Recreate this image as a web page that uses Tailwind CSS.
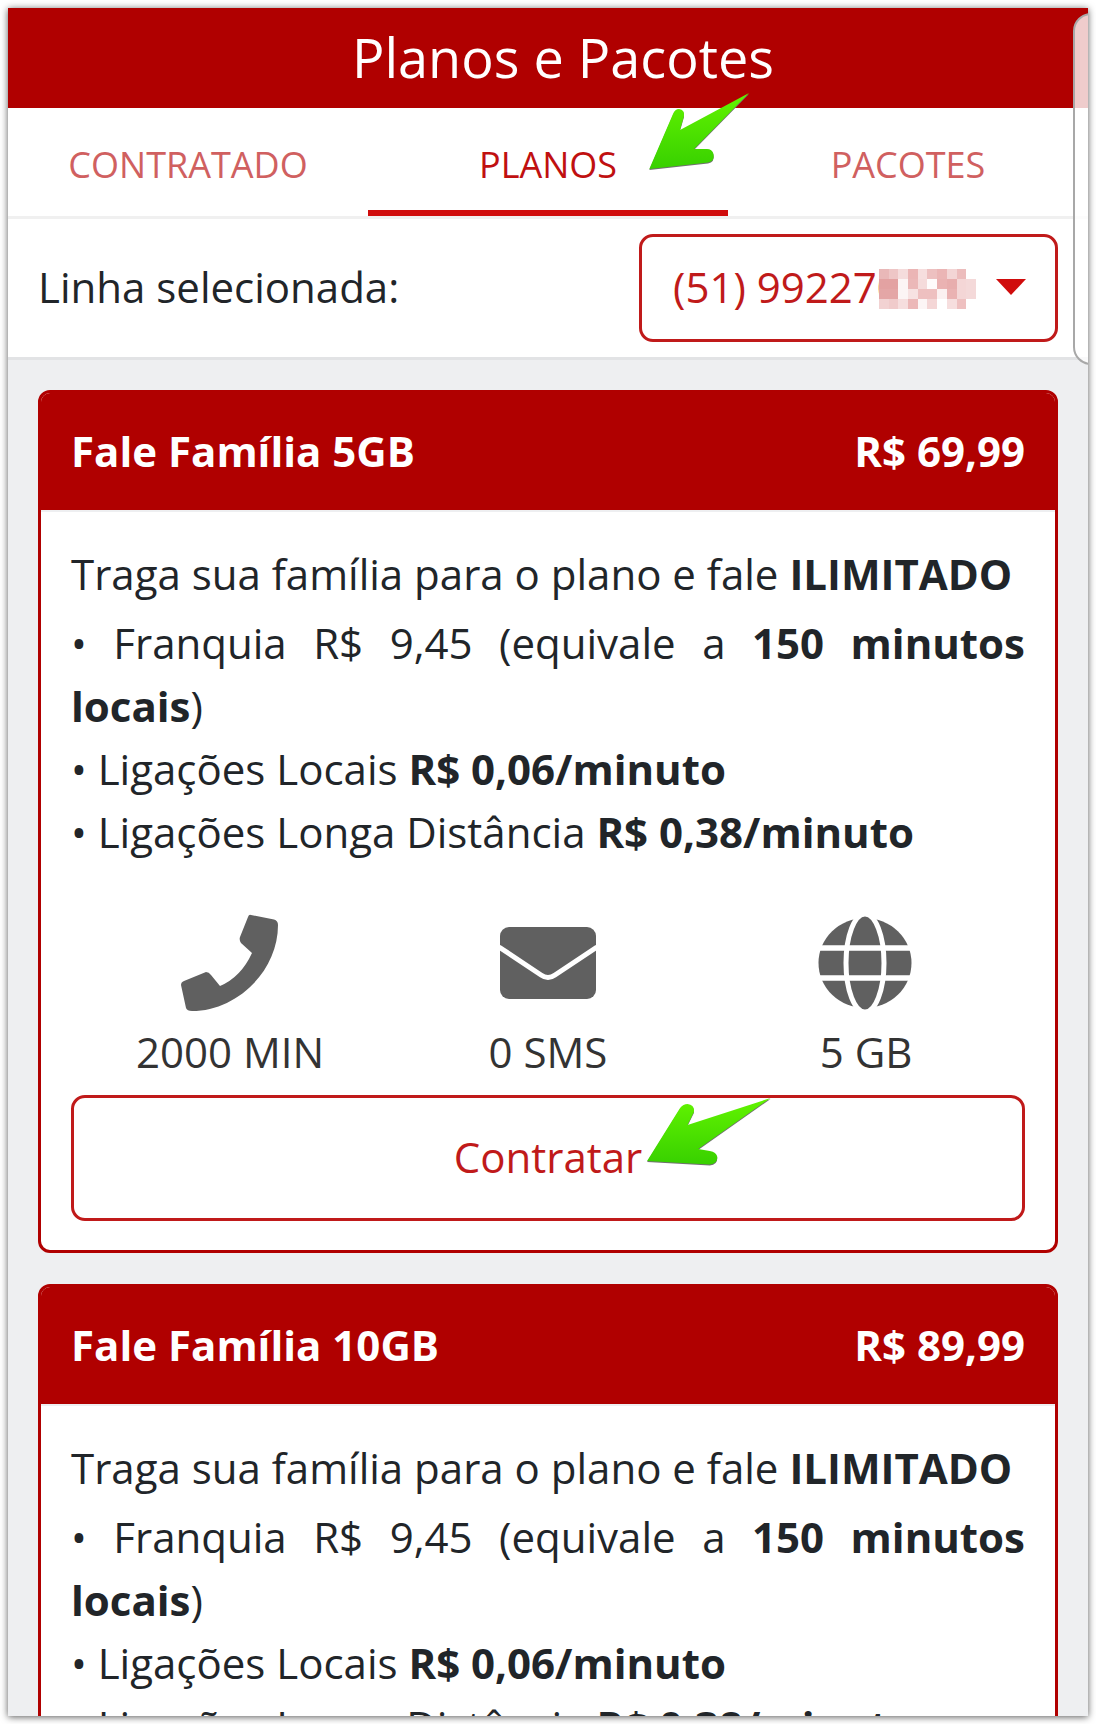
<!DOCTYPE html>
<html lang="en">
  <head>
    <meta charset="UTF-8" />
    <script src="https://cdn.jsdelivr.net/npm/@tailwindcss/browser@4"></script>
    <title>Planos e Pacotes</title>
  </head>
  <body class="bg-white font-['Open_Sans',sans-serif]">
    <div class="p-2 h-[1724px]">
      <div class="relative w-[1080px] h-[1708px] overflow-hidden bg-[#eeeff1] shadow-[0_1px_7px_rgba(0,0,0,0.65)]">
        <!-- header -->
        <div class="h-[100px] bg-[#b00000] text-white text-[54px] leading-[98px] text-center pl-[30px]">Planos e Pacotes</div>

        <!-- tabs -->
        <div class="grid grid-cols-3 h-[111px] bg-white border-b-[3px] border-[#f0f0f0] text-[36px] text-center">
          <div class="pt-[16px] leading-[82px] text-[#d06060]">CONTRATADO</div>
          <div class="pt-[16px] leading-[82px] text-[#c01010] border-b-[6px] border-[#d00c0c]">PLANOS</div>
          <div class="pt-[16px] leading-[82px] text-[#d06060]">PACOTES</div>
        </div>

        <!-- line selector -->
        <div class="flex items-center justify-between h-[141px] px-[30px] bg-white border-b-[3px] border-[#e2e3e5]">
          <div class="text-[42px] leading-[60px] pb-[3px] text-[#212529]">Linha selecionada:</div>
          <div class="flex items-center w-[419px] h-[108px] pl-[31px] pb-[4px] border-[3px] border-[#c01a1a] rounded-[14px] text-[42px] text-[#c01a1a] overflow-hidden whitespace-nowrap">(51) 992270</div>
        </div>

        <!-- plans -->
        <div class="px-[30px] pt-[30px] flex flex-col gap-[31px]">
          <section class="rounded-[12px] overflow-hidden border-[3px] border-[#b00000] bg-white">
            <div class="flex justify-between items-center h-[117px] pb-[2px] px-[30px] bg-[#b00000] text-white text-[42px] font-bold">
              <span>Fale Família 5GB</span><span>R$ 69,99</span>
            </div>
            <div class="px-[30px] pt-[30px] pb-[29px] text-[42px] leading-[63px] text-[#212529] border-t-2 border-[#eeeff1]">
              <p class="mb-[6px]">Traga sua família para o plano e fale <b>ILIMITADO</b></p>
              <p class="text-justify">• Franquia R$ 9,45 (equivale a <b>150 minutos locais</b>)</p>
              <p>• Ligações Locais <b>R$ 0,06/minuto</b></p>
              <p>• Ligações Longa Distância <b>R$ 0,38/minuto</b></p>
              <div class="grid grid-cols-3 mt-[51px] text-center text-[#333333] leading-[63px]">
                <div class="flex flex-col items-center">
                  <svg class="h-[98px] w-[98px] mb-[8px]" viewBox="0 0 98 98"><path fill="#606060" d="M70 1 L93 5.500 Q97 6.500 97 11 C97 58 55 97 11 97 Q6 97 5 94 L0 71 Q0 68 3 67 L25 58 Q28 58 30 61 L39 72 Q60 63 71 39 L60 29 Q58 26 59 23 L67 3 Q68 0 70 1 Z"/></svg>
                  <div>2000 MIN</div>
                </div>
                <div class="flex flex-col items-center">
                  <svg class="h-[98px] w-[98px] mb-[8px]" viewBox="0 0 98 98"><rect x="1" y="13" width="96" height="72" rx="9" fill="#606060"/><path d="M0 33 L42 61 Q49 66 56 61 L98 33" fill="none" stroke="#fff" stroke-width="5"/></svg>
                  <div>0 SMS</div>
                </div>
                <div class="flex flex-col items-center">
                  <svg class="h-[98px] w-[98px] mb-[8px]" viewBox="0 0 98 98"><ellipse cx="48" cy="49" rx="46.500" ry="45" fill="#606060"/><ellipse cx="48" cy="49" rx="19" ry="49" fill="#606060" stroke="#fff" stroke-width="5"/><path d="M0 34 H98 M0 64 H98" stroke="#fff" stroke-width="5.500"/></svg>
                  <div>5 GB</div>
                </div>
              </div>
              <button class="block w-full h-[126px] mt-[12px] pb-[3px] border-[3px] border-[#c01a1a] rounded-[14px] text-[#c01a1a]" type="button">Contratar</button>
            </div>
          </section>

          <section class="rounded-[12px] overflow-hidden border-[3px] border-[#b00000] bg-white">
            <div class="flex justify-between items-center h-[117px] pb-[2px] px-[30px] bg-[#b00000] text-white text-[42px] font-bold">
              <span>Fale Família 10GB</span><span>R$ 89,99</span>
            </div>
            <div class="px-[30px] pt-[30px] pb-[40px] text-[42px] leading-[63px] text-[#212529] border-t-2 border-[#eeeff1]">
              <p class="mb-[6px]">Traga sua família para o plano e fale <b>ILIMITADO</b></p>
              <p class="text-justify">• Franquia R$ 9,45 (equivale a <b>150 minutos locais</b>)</p>
              <p>• Ligações Locais <b>R$ 0,06/minuto</b></p>
              <p>• Ligações Longa Distância <b>R$ 0,38/minuto</b></p>
            </div>
          </section>
        </div>

        <!-- select caret -->
        <svg class="absolute left-[988px] top-[271px]" width="30" height="16" viewBox="0 0 30 16"><path d="M0 0 H30 L15 16 Z" fill="#d00c0c"/></svg>

        <!-- blurred digits -->
        <div class="absolute left-[871px] top-[261px] grid grid-cols-10 w-[97px] h-[40px]">
          <i class="bg-[#e9b8b8]"></i><i class="bg-[#eec6c6]"></i><i class="bg-[#f5dcdc]"></i><i class="bg-[#ebb5b5]"></i><i class="bg-[#f6dede]"></i><i class="bg-[#edc0c0]"></i><i class="bg-[#ebb5b5]"></i><i class="bg-[#f3d5d5]"></i><i class="bg-[#ecbcbc]"></i><i class="bg-white"></i>
          <i class="bg-[#e3a2a2]"></i><i class="bg-[#e3a2a2]"></i><i class="bg-[#fcf5f5]"></i><i class="bg-[#ebb8b8]"></i><i class="bg-[#f5dbdb]"></i><i class="bg-[#fefbfb]"></i><i class="bg-[#eab2b2]"></i><i class="bg-[#e8adad]"></i><i class="bg-[#f4d6d6]"></i><i class="bg-[#f4d9d9]"></i>
          <i class="bg-[#e4a6a6]"></i><i class="bg-[#e4a6a6]"></i><i class="bg-[#fcf5f5]"></i><i class="bg-[#f7e2e2]"></i><i class="bg-[#eec0c0]"></i><i class="bg-[#eec0c0]"></i><i class="bg-[#fbf0f0]"></i><i class="bg-[#eab2b2]"></i><i class="bg-[#f4d6d6]"></i><i class="bg-[#f4d9d9]"></i>
          <i class="bg-[#f2d2d2]"></i><i class="bg-[#f0cbcb]"></i><i class="bg-[#f6dede]"></i><i class="bg-[#ecb8b8]"></i><i class="bg-[#fcf5f5]"></i><i class="bg-[#f4d6d6]"></i><i class="bg-white"></i><i class="bg-[#f6dede]"></i><i class="bg-[#eec0c0]"></i><i class="bg-white"></i>
        </div>

        <!-- next page peeking in on the right -->
        <div class="absolute left-[1065px] top-[5px] w-[30px] h-[352px] bg-white/80 border-2 border-[#a8a8a8] rounded-l-[18px]"></div>

        <!-- annotation arrows -->
        <svg class="absolute left-[640px] top-[81px]" width="130" height="90" viewBox="0 0 130 90">
          <defs>
            <linearGradient id="g1" x1="0" y1="0" x2="0" y2="1"><stop offset="0" stop-color="#62f400"/><stop offset="1" stop-color="#38d000"/></linearGradient>
          </defs>
          <path d="M1.300 80 L60 73.500 Q67 72 65.500 65 Q64 60 59 60 L46 60 L101 4 L32 41 L36 27 Q37 21 31 20 Q27 20 25 25 Z" fill="#707070" transform="translate(0 1)"/>
          <path d="M1.300 80 L60 73.500 Q67 72 65.500 65 Q64 60 59 60 L46 60 L101 4 L32 41 L36 27 Q37 21 31 20 Q27 20 25 25 Z" fill="url(#g1)"/>
        </svg>
        <svg class="absolute left-[638px] top-[1089px]" width="132" height="80" viewBox="0 0 124 80" preserveAspectRatio="none">
          <path d="M1 64 L60 67.500 Q67 67 67 60 Q66 55 60 54 L49 52 L117 1 L39 28 L45 15 Q46 8 39 7 Q35 7 32 11 Z" fill="#707070" transform="translate(0 1)"/>
          <path d="M1 64 L60 67.500 Q67 67 67 60 Q66 55 60 54 L49 52 L117 1 L39 28 L45 15 Q46 8 39 7 Q35 7 32 11 Z" fill="url(#g1)"/>
        </svg>
      </div>
    </div>
  </body>
</html>
